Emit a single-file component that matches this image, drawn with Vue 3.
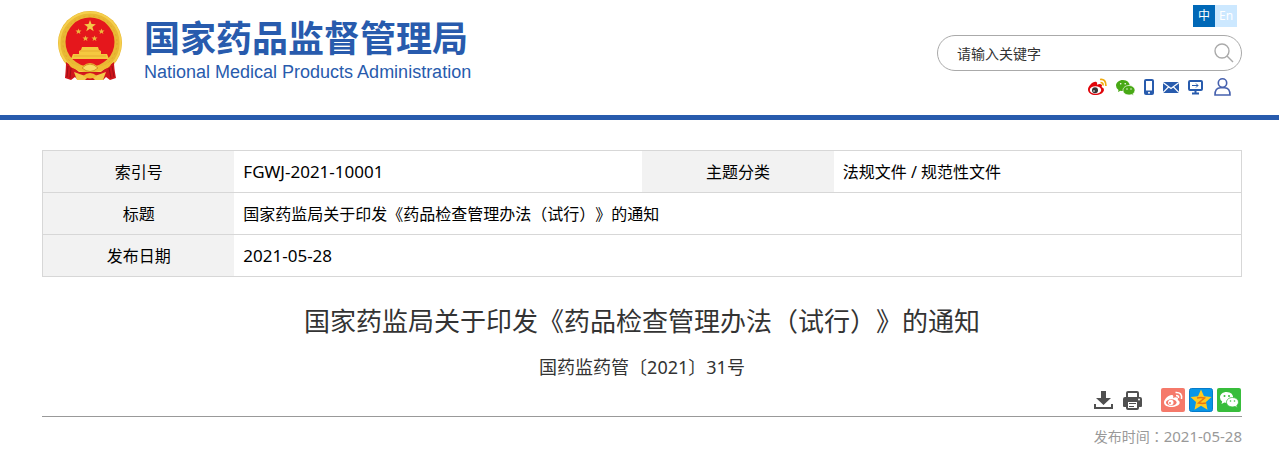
<script setup>
import { ref } from 'vue'

const keyword = ref('')
const title = '国家药监局关于印发《药品检查管理办法（试行）》的通知'
</script>

<template>
  <header class="header">
    <div class="wrap header-inner">
      <a class="brand" href="#">
        <svg class="emblem" viewBox="0 0 72 80" aria-hidden="true">
          <circle cx="36" cy="37" r="32" fill="#e9b834" />
          <circle cx="36" cy="37" r="30.500" fill="none" stroke="#f5cf4c" stroke-width="2" />
          <circle cx="36" cy="37" r="27" fill="none" stroke="#e0aa2c" stroke-width="1" stroke-dasharray="2 3" />
          <circle cx="36" cy="36" r="24.500" fill="#e5171c" />
          <path d="M36 14l1.500 4.100 4.400.1-3.500 2.700 1.300 4.300-3.700-2.500-3.700 2.500 1.300-4.300-3.500-2.700 4.400-.1Z" fill="#f3c94a" />
          <g fill="#edb93e">
            <path id="small-star" d="M24.500 22.500l.8 2 2.200.1-1.700 1.300.6 2.200-1.900-1.300-1.900 1.300.6-2.200-1.700-1.300 2.200-.1Z" />
            <use href="#small-star" x="23" />
            <use href="#small-star" x="7" y="7" />
            <use href="#small-star" x="16" y="7" />
          </g>
          <path d="M28 41H44L45 44 47 45V48H53L55 53H17L19 48H25V45L27 44Z" fill="#f5c83f" />
          <path d="M26 45H46M20 50H52" stroke="#e6ad32" />
          <path d="M12 56Q12 62 11 72L17 74 21 71 24 74H49L52 71 56 74 62 72Q60 62 60 56Q53 61 47 66H25Q19 61 12 56Z" fill="#cf151b" />
          <path d="M14 60L13 71M17 62L16 72M55 62L57 72M58 60L60 71" stroke="#a00e16" stroke-width="1" />
          <path d="M14 54Q21 61 29 60Q36 54 43 60Q51 61 58 54Q58 61 51 63Q45 66 36 65Q27 66 21 63Q14 61 14 54Z" fill="#efbd34" />
          <path d="M28 62Q36 54 44 62Q36 69 28 62Z" fill="#f8db65" stroke="#d39425" />
          <path d="M18 62Q27 70 36 66Q45 70 54 62L50 72 43 70 36 73 29 70 22 72Z" fill="#d61a20" />
          <path d="M20 66L23 74H31L34 71ZM52 66L49 74H41L38 71Z" fill="#f3ca4b" />
          <path d="M29 70Q36 64 43 70Q36 75 29 70Z" fill="#f0ba32" />
        </svg>
        <span class="brand-text">
          <strong class="brand-cn">国家药品监督管理局</strong>
          <span class="brand-en">National Medical Products Administration</span>
        </span>
      </a>

      <div class="tools">
        <nav class="langs" aria-label="语言">
          <a class="lang active" href="#">中</a>
          <a class="lang" href="#">En</a>
        </nav>
        <form class="search" @submit.prevent>
          <input v-model="keyword" type="text" aria-label="请输入关键字" placeholder="请输入关键字" />
          <button type="submit" aria-label="搜索">
            <svg width="20" height="20" viewBox="0 0 20 20" fill="none" stroke="#aaa" stroke-width="1.4">
              <circle cx="8" cy="8" r="7" /><path d="M13 13l6 6" />
            </svg>
          </button>
        </form>
        <nav class="links" aria-label="快捷入口">
          <a href="#" aria-label="微博">
            <svg width="19" height="18" viewBox="0 0 19 18">
              <path d="M0 11.5C0 8 5 3 8 3.8q1.8.6 1 3 3-1.3 4.500-.3 1 .8.1 2.500 2.600.8 2.400 3C15.700 15 11.500 17 7.500 17 3.500 17 0 15 0 11.500Z" fill="#e0050b" />
              <ellipse cx="7.500" cy="12" rx="5.700" ry="3.800" fill="#fff" />
              <circle cx="7" cy="12.200" r="3" fill="#333" />
              <circle cx="6" cy="13" r=".8" fill="#fff" />
              <path d="M12 1.500Q18 .5 18 8M12.500 4.500Q15.500 4.500 15 7.500" fill="none" stroke="#f0ab10" stroke-width="1.700" />
            </svg>
          </a>
          <a href="#" aria-label="微信">
            <svg width="19" height="18" viewBox="0 0 19 18">
              <path d="M7 2C3 2 0 4.500 0 7.500q0 3 2.500 4.500L2 14l2.500-1.300Q6 13 7 13q4.500 0 7-4Q13.500 2 7 2Z" fill="#48a915" />
              <path d="M13 7.500c3.300 0 6 2.100 6 4.800q0 2-2 3.500l.5 1.700-2-1q-1.500.5-2.500.5c-3.500 0-6-2-6-4.700s2.700-4.800 6-4.800Z" fill="#48a915" stroke="#fff" stroke-width=".7" />
              <g fill="#fff"><circle cx="4.700" cy="5.700" r=".8" /><circle cx="9.200" cy="5.700" r=".8" /><circle cx="11" cy="11" r=".7" /><circle cx="15" cy="11" r=".7" /></g>
            </svg>
          </a>
          <a href="#" aria-label="移动端">
            <svg width="10" height="18" viewBox="0 0 10 18">
              <rect y="1" width="10" height="16" rx="2" fill="#285bad" /><path d="M2 3h6v9.500H2z" fill="#fff" /><circle cx="5" cy="14.800" r="1" fill="#fff" />
            </svg>
          </a>
          <a href="#" aria-label="邮箱">
            <svg width="16" height="18" viewBox="0 0 16 18">
              <path d="M0 4h16v11H0z" fill="#285bad" /><path d="M0 4.500l8 6 8-6M0 14.500l5.500-5.500M16 14.500L10.500 9" fill="none" stroke="#fff" stroke-width="1.200" />
            </svg>
          </a>
          <a href="#" aria-label="电脑端">
            <svg width="15" height="18" viewBox="0 0 15 18" fill="none" stroke="#285bad">
              <rect x="1" y="3" width="13" height="9" rx="1" stroke-width="2" /><path d="M4 7.500h6M8 5.500l2 2-2 2" /><path d="M7.500 12v3M4 15.500h7" stroke-width="2" />
            </svg>
          </a>
          <a href="#" aria-label="用户">
            <svg width="19" height="18" viewBox="0 0 19 18" fill="none" stroke="#4661ae" stroke-width="1.600">
              <circle cx="10.500" cy="5" r="4.200" /><path d="M3 17q0-7.200 5.500-7.200h4Q18 9.800 18 17Z" />
            </svg>
          </a>
        </nav>
      </div>
    </div>
  </header>

  <main class="wrap content">
    <table class="info">
      <colgroup>
        <col class="col-label" /><col class="col-value" /><col class="col-label" /><col class="col-value" />
      </colgroup>
      <tbody>
        <tr>
          <th scope="row">索引号</th>
          <td class="latin">FGWJ-2021-10001</td>
          <th scope="row">主题分类</th>
          <td>法规文件 / 规范性文件</td>
        </tr>
        <tr>
          <th scope="row">标题</th>
          <td colspan="3">{{ title }}</td>
        </tr>
        <tr>
          <th scope="row">发布日期</th>
          <td class="latin" colspan="3">2021-05-28</td>
        </tr>
      </tbody>
    </table>

    <h1>{{ title }}</h1>
    <p class="number">国药监药管〔2021〕31号</p>

    <div class="actions">
      <button type="button" aria-label="下载">
        <svg width="20" height="24" viewBox="0 0 20 24">
          <path d="M7 3h5v7h5l-7.500 7L2 10h5Z" fill="#505050" /><path d="M1 16v4h17v-4" fill="none" stroke="#505050" stroke-width="2" />
        </svg>
      </button>
      <button class="print" type="button" aria-label="打印">
        <svg width="19" height="24" viewBox="0 0 19 24">
          <path d="M3 9V5q0-2 2-2h9q2 0 2 2v4h1q2 0 2 2v7q0 1-1 1h-2v1q0 2-2 2H5q-2 0-2-2v-1H1q-1 0-1-1v-7q0-2 2-2Z" fill="#505050" />
          <path d="M5 5h9v4H5zM5 14h9v6H5z" fill="#fff" /><path d="M6 15.500h7M6 18.500h5" stroke="#505050" stroke-width="1.200" /><circle cx="16" cy="11.500" r="1" fill="#fff" />
        </svg>
      </button>
      <a href="#" aria-label="分享到微博">
        <svg width="24" height="24" viewBox="0 0 24 24">
          <rect width="24" height="24" rx="2" fill="#f5796a" />
          <path d="M3 14.500C3 11 8 6.500 11 7q2 .4 1 3 3-1.200 4.500-.2 1 .8.200 2.200 2 .6 2 2.800C18.500 17.500 14.500 19 10.500 19S3 17.500 3 14.500Z" fill="#fff" />
          <ellipse cx="10.300" cy="14.500" rx="5.300" ry="3.300" fill="#f5796a" /><circle cx="9.800" cy="14.500" r="2.700" fill="#fff" /><circle cx="9" cy="15" r="1" fill="#f5796a" />
          <path d="M14.500 4.500Q21.500 4 20.500 11M15 7.500Q18 7.500 17.500 10" fill="none" stroke="#fff" stroke-width="1.500" />
        </svg>
      </a>
      <a href="#" aria-label="分享到QQ空间">
        <svg width="24" height="24" viewBox="0 0 24 24">
          <rect x=".5" y=".5" width="23" height="23" rx="2" fill="#0796e7" stroke="#077bc9" />
          <path d="M12 1.500l3 6.800 7.500.8-5.500 5 1.500 7.700-6.500-4-6.500 4L7 14.100l-5.500-5 7.500-.8Z" fill="#ffcb1e" />
          <path d="M8 10q4-1 7.500 0l-6 5q4 .8 7.500 0" fill="none" stroke="#e87512" stroke-width="1.500" />
        </svg>
      </a>
      <a href="#" aria-label="分享到微信">
        <svg width="24" height="24" viewBox="0 0 24 24">
          <rect width="24" height="24" rx="2" fill="#38bd3c" />
          <path d="M9.500 4C6 4 3 6.200 3 9.500q0 2.500 2.200 4L4.500 16l2.800-1.500q1.200.4 2.200.4 4.700 0 6.700-4Q16.500 4 9.500 4Z" fill="#fff" />
          <path d="M15.500 9.500c3.500 0 6 2 6 4.700q0 2-1.700 3.300l.5 2-2.300-1q-1.200.4-2.500.4c-3.500 0-6-2-6-4.700s2.700-4.700 6-4.700Z" fill="#fff" stroke="#38bd3c" stroke-width=".8" />
          <g fill="#38bd3c"><circle cx="7.500" cy="8" r="1" /><circle cx="12" cy="8" r="1" /><circle cx="13.500" cy="13" r=".8" /><circle cx="17.500" cy="13" r=".8" /></g>
        </svg>
      </a>
    </div>
    <p class="published">发布时间<span class="colon" lang="zh-TW">：</span><time datetime="2021-05-28">2021-05-28</time></p>
  </main>
</template>

<style>
body {
  margin: 0;
  background: #fff;
  color: #000;
  font-family: "Noto Sans", "Noto Sans CJK SC", sans-serif;
  text-spacing-trim: space-all;
}
</style>

<style scoped>
.wrap {
  box-sizing: border-box;
  max-width: 1205px;
  margin: 0 auto;
  padding-left: 5px;
}
.header {
  border-bottom: 5px solid #285bad;
  padding: 5px 0 19px 0;
}
.header-inner {
  display: flex;
  justify-content: space-between;
  align-items: flex-start;
}
a {
  color: inherit;
  text-decoration: none;
}
svg {
  display: block;
}
.brand {
  display: flex;
  gap: 18px;
  padding: 1px 0 0 12px;
  color: #285bad;
}
.emblem {
  width: 72px;
  height: 80px;
}
.brand-text {
  display: flex;
  flex-direction: column;
  padding-top: 10px;
}
.brand-cn {
  font: bold 36px/40px "Noto Sans CJK SC", sans-serif;
}
.brand-en {
  font: 18px/32px "Liberation Sans", sans-serif;
}
.tools {
  display: flex;
  flex-direction: column;
  align-items: flex-end;
  width: 305px;
}
.langs {
  display: flex;
  margin-right: 5px;
  font-size: 12px;
  line-height: 22px;
  text-align: center;
}
.lang {
  width: 22px;
  background: #cce8ff;
  color: #fff;
}
.lang.active {
  background: #0068b7;
}
.search {
  display: flex;
  align-items: center;
  box-sizing: border-box;
  width: 100%;
  height: 36px;
  margin-top: 8px;
  padding: 0 7px 0 19px;
  border: 1px solid #aaa;
  border-radius: 18px;
}
.search input {
  flex: 1;
  min-width: 0;
  padding: 0;
  border: 0;
  outline: 0;
  background: none;
  color: #333;
  font: 14px/20px "Noto Sans CJK SC", sans-serif;
}
.search input::placeholder {
  color: #333;
  opacity: 1;
}
button {
  padding: 0;
  border: 0;
  background: none;
  cursor: pointer;
}
.links {
  display: flex;
  gap: 9px;
  margin: 7px 11px 0 0;
}
.content {
  padding-top: 30px;
}
.info {
  width: 100%;
  table-layout: fixed;
  border-collapse: collapse;
  border: 1px solid #d7d7d7;
  font-size: 16px;
  line-height: 24px;
}
.col-label {
  width: 16%;
}
.col-value {
  width: 34%;
}
tr {
  border-bottom: 1px solid #d7d7d7;
}
th,
td {
  height: 42px;
  box-sizing: border-box;
  padding: 0 9px;
  font-weight: normal;
}
th {
  background: #f2f2f2;
}
.latin {
  font-size: 17px;
}
h1 {
  margin: 24px 0 0;
  color: #333;
  font-size: 26px;
  font-weight: normal;
  line-height: 40px;
  text-align: center;
}
.number {
  margin: 12px 0 0;
  color: #333;
  font-size: 18px;
  line-height: 28px;
  text-align: center;
}
.actions {
  display: flex;
  justify-content: flex-end;
  gap: 4px;
  margin-top: 7px;
  padding: 0 1px 4px 0;
  border-bottom: 1px solid #999;
}
.actions .print {
  margin: 0 15px 0 5px;
}
.published {
  margin: 7px 0 0;
  color: #999;
  font-size: 14px;
  line-height: 24px;
  text-align: right;
}
.published time {
  font-size: 15px;
}
.colon {
  font-family: "Noto Sans CJK TC", sans-serif;
}
</style>
